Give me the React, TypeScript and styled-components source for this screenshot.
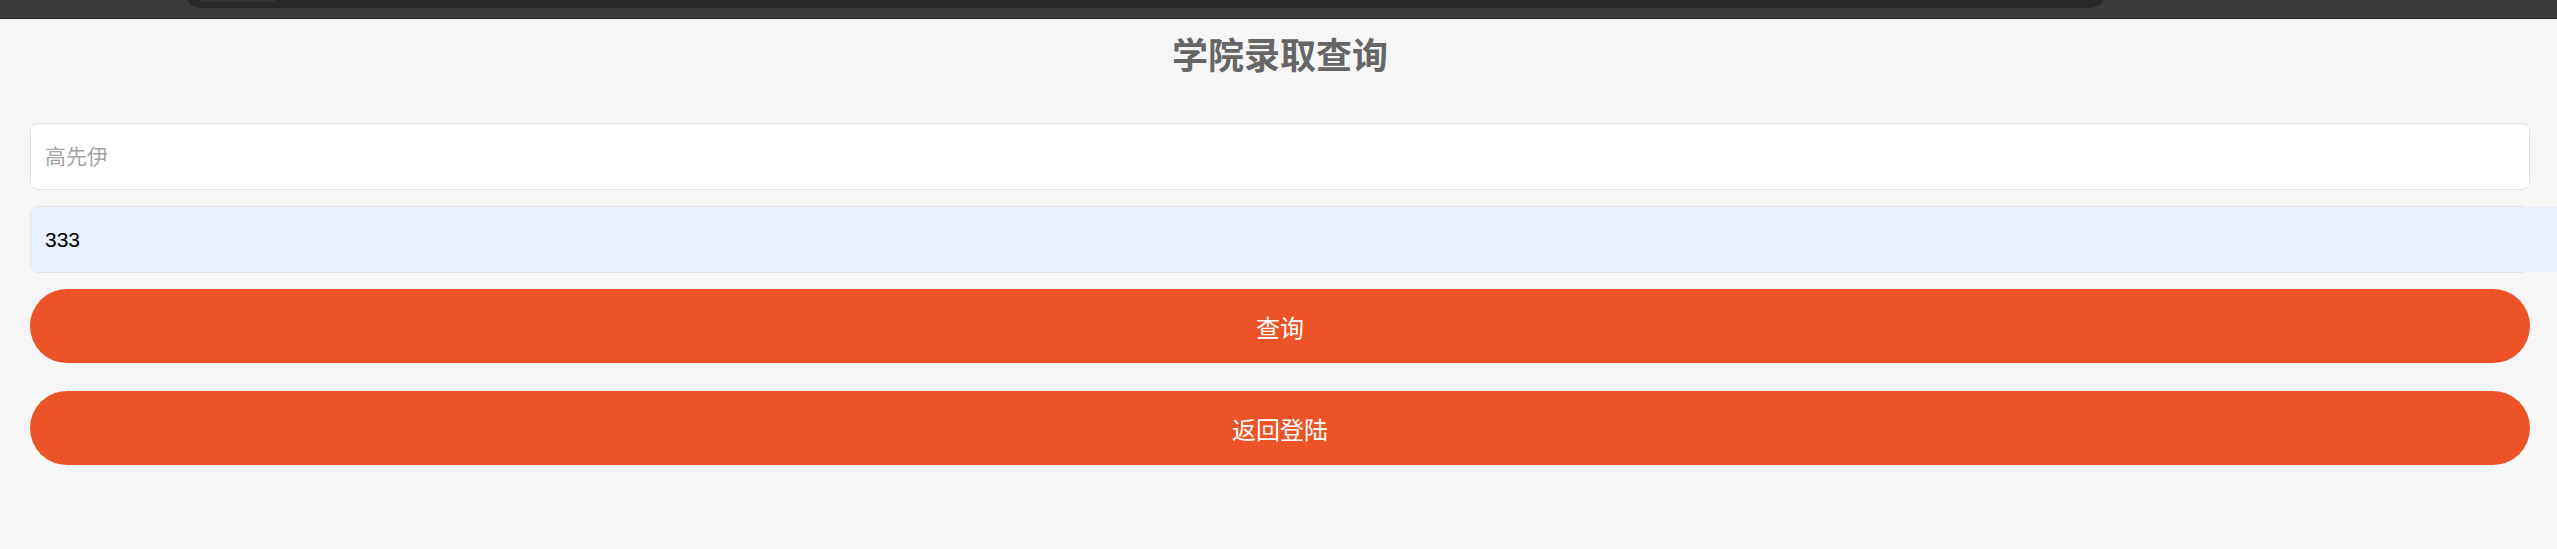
import styled, { createGlobalStyle } from "styled-components"

const GlobalStyle = createGlobalStyle`
  html,
  body {
    margin: 0;
    padding: 0;
    min-height: 100%;
    background: #f6f6f6;
    overflow-x: hidden;
  }

  body {
    font-family: "Liberation Sans", "Noto Sans CJK SC", sans-serif;
  }

  * {
    box-sizing: border-box;
  }
`

const TopBar = styled.div`
  height: 19px;
  padding-left: 188px;
  background: #3c3c3c;
  border-bottom: 1px solid #262626;
`

const Notch = styled.div`
  width: 1915px;
  height: 8px;
  padding-left: 12px;
  background: #282828;
  border-radius: 0 0 16px 16px / 0 0 8px 8px;
`

const NotchTab = styled.div`
  width: 75px;
  height: 2px;
  background: #333;
  border-radius: 0 0 4px 4px;
`

const Page = styled.main`
  display: flex;
  flex-direction: column;
  padding: 20px 27px 0 30px;
  min-height: 530px;
`

const Title = styled.h1`
  margin: 0 0 48px;
  text-align: center;
  font-family: "Liberation Sans", "Noto Sans CJK SC", sans-serif;
  font-size: 36px;
  line-height: 36px;
  font-weight: 700;
  color: #666;
`

const Form = styled.form`
  display: flex;
  flex-direction: column;
  gap: 16px;
`

const Field = styled.div<{ $filled?: boolean }>`
  display: flex;
  height: 67px;
  border: 1px solid #e3e3e3;
  border-radius: 8px;
  background: ${(p) => (p.$filled ? "#e8f0fe" : "#fff")};
`

const Input = styled.input<{ $filled?: boolean }>`
  flex: 1;
  min-width: 0;
  margin-right: ${(p) => (p.$filled ? "-30px" : "0")};
  padding: 0 14px;
  border: none;
  outline: none;
  border-radius: ${(p) => (p.$filled ? "7px 0 0 7px" : "7px")};
  background: ${(p) => (p.$filled ? "#e8f0fe" : "#fff")};
  font-family: "Liberation Sans", "Noto Sans CJK SC", sans-serif;
  font-size: 21px;
  color: #000;

  &::placeholder {
    color: #a5a5a5;
  }
`

const Button = styled.button<{ $spaced?: boolean }>`
  height: 74px;
  margin-top: ${(p) => (p.$spaced ? "12px" : "0")};
  border: none;
  border-radius: 37px;
  background: #ec5326;
  color: #fff;
  font-family: "Liberation Sans", "Noto Sans CJK SC", sans-serif;
  font-size: 24px;
  cursor: pointer;
`

export default function App() {
  return (
    <>
      <GlobalStyle />
      <TopBar>
        <Notch>
          <NotchTab />
        </Notch>
      </TopBar>
      <Page>
        <Title>学院录取查询</Title>
        <Form onSubmit={(e) => e.preventDefault()}>
          <Field>
            <Input type="text" placeholder="高先伊" />
          </Field>
          <Field $filled>
            <Input $filled type="text" defaultValue="333" />
          </Field>
          <Button type="submit">查询</Button>
          <Button type="button" $spaced>
            返回登陆
          </Button>
        </Form>
      </Page>
    </>
  )
}
